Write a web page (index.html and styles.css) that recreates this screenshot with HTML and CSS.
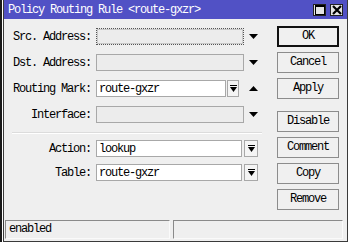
FILE: index.html
```html
<!DOCTYPE html>
<html lang="en">
<head>
    <meta charset="UTF-8">
    <title>Policy Routing Rule</title>
    <link rel="stylesheet" href="styles.css">
</head>
<body>
    <div class="window">
        <div class="titlebar">
            <span class="title">Policy Routing Rule &lt;route-gxzr&gt;</span>
            <div class="winbtns">
                <span class="wbtn">
                    <svg width="10" height="10" viewBox="0 0 10 10"><rect x="0.5" y="0.5" width="9" height="9" fill="none" stroke="#000"/><rect x="0" y="0" width="10" height="2" fill="#000"/></svg>
                </span>
                <span class="wbtn">
                    <svg width="10" height="10" viewBox="0 0 10 10"><path d="M1 1 L9 9 M9 1 L1 9" stroke="#000" stroke-width="2.2"/></svg>
                </span>
            </div>
        </div>
        <div class="content">
            <div class="form">
                <div class="group">
                    <div class="row">
                        <label>Src. Address:</label>
                        <div class="field empty focus"></div>
                        <span class="tail"><svg width="9" height="5" viewBox="0 0 9 5"><path d="M0 0 H9 L4.5 5 Z"/></svg></span>
                    </div>
                    <div class="row">
                        <label>Dst. Address:</label>
                        <div class="field empty"></div>
                        <span class="tail"><svg width="9" height="5" viewBox="0 0 9 5"><path d="M0 0 H9 L4.5 5 Z"/></svg></span>
                    </div>
                    <div class="row">
                        <label>Routing Mark:</label>
                        <div class="field short">route-gxzr</div>
                        <span class="pick"><svg width="7" height="7" viewBox="0 0 7 7"><path d="M0 0.5 H7" stroke="#000"/><path d="M0 2 H7 L3.5 7 Z"/></svg></span>
                        <span class="tail up"><svg width="9" height="5" viewBox="0 0 9 5"><path d="M0 5 H9 L4.5 0 Z"/></svg></span>
                    </div>
                    <div class="row">
                        <label>Interface:</label>
                        <div class="field empty"></div>
                        <span class="tail"><svg width="9" height="5" viewBox="0 0 9 5"><path d="M0 0 H9 L4.5 5 Z"/></svg></span>
                    </div>
                </div>
                <div class="sep"></div>
                <div class="group tight">
                    <div class="row">
                        <label>Action:</label>
                        <div class="field wide">lookup</div>
                        <span class="pick end"><svg width="7" height="7" viewBox="0 0 7 7"><path d="M0 0.5 H7" stroke="#000"/><path d="M0 2 H7 L3.5 7 Z"/></svg></span>
                    </div>
                    <div class="row">
                        <label>Table:</label>
                        <div class="field wide">route-gxzr</div>
                        <span class="pick end"><svg width="7" height="7" viewBox="0 0 7 7"><path d="M0 0.5 H7" stroke="#000"/><path d="M0 2 H7 L3.5 7 Z"/></svg></span>
                    </div>
                </div>
            </div>
            <div class="buttons">
                <div class="btn default">OK</div>
                <div class="btn">Cancel</div>
                <div class="btn">Apply</div>
                <div class="btn spaced">Disable</div>
                <div class="btn">Comment</div>
                <div class="btn">Copy</div>
                <div class="btn">Remove</div>
            </div>
        </div>
        <div class="status">
            <div class="panel first">enabled</div>
            <div class="panel"></div>
        </div>
    </div>
</body>
</html>
```

FILE: styles.css
```css
*{
    margin:0;
    padding:0;
    box-sizing:border-box;
}
body{
    background:#fff;
    border-left:2px solid #1a1a1a;
    font-family:"Liberation Mono", "DejaVu Sans Mono", monospace;
    font-size:12px;
    letter-spacing:-1.2px;
    color:#000;
}
.window{
    display:flex;
    flex-direction:column;
    width:345px;
    height:242px;
    margin-left:1px;
    background:#efefef;
    border:1px solid #3a3a3a;
    border-top:0;
}
.titlebar{
    display:flex;
    align-items:center;
    justify-content:space-between;
    height:19px;
    padding:0 4px 0 4px;
    background:#5151c5;
}
.title{
    color:#fff;
}
.winbtns{
    display:flex;
    gap:4px;
}
.wbtn{
    display:flex;
    align-items:center;
    justify-content:center;
    width:13px;
    height:12px;
    background:#e4e4e4;
    border:1px solid #222;
}
.content{
    flex:1;
    display:flex;
    justify-content:space-between;
}
.form{
    padding-top:9px;
}
.group{
    display:flex;
    flex-direction:column;
    gap:9px;
}
.group.tight{
    gap:7px;
}
.row{
    display:flex;
    align-items:center;
    height:17px;
}
.row label{
    width:87px;
    margin-right:5px;
    text-align:right;
}
.field{
    width:148px;
    height:17px;
    padding:1px 2px;
    line-height:14px;
    background:#fff;
    border:1px solid #a8a8a8;
}
.field.empty{
    background:#ececec;
}
.field.focus{
    border:1px dotted #555;
    outline:1px solid #c8c8c8;
    outline-offset:-2px;
}
.field.short{
    width:130px;
}
.field.wide{
    width:146px;
}
.pick{
    display:flex;
    align-items:center;
    justify-content:center;
    width:12px;
    height:17px;
    margin-left:1px;
    background:#f4f4f4;
    border:1px solid #a8a8a8;
}
.pick.end{
    width:14px;
    margin-left:2px;
}
.tail{
    display:flex;
    justify-content:center;
    width:10px;
    margin-left:4px;
}
.row .up{
    margin-left:9px;
}
.sep{
    width:250px;
    margin:9px 0 6px 8px;
    border-top:1px solid #dcdcdc;
    border-bottom:1px solid #fff;
}
.buttons{
    display:flex;
    flex-direction:column;
    gap:5px;
    width:62px;
    margin:7px 8px 0 0;
}
.btn{
    height:21px;
    line-height:19px;
    text-align:center;
    background:#f0f0f0;
    border:1px solid #8c8c8c;
}
.btn.default{
    border:2px solid #111;
    line-height:17px;
}
.btn.spaced{
    margin-top:7px;
}
.status{
    display:flex;
    gap:3px;
    padding:0 4px 2px 1px;
}
.panel{
    flex:1;
    height:19px;
    padding-left:3px;
    line-height:17px;
    border-top:1px solid #8a8a8a;
    border-left:1px solid #8a8a8a;
    border-right:1px solid #fafafa;
    border-bottom:1px solid #fafafa;
}
.panel.first{
    flex:none;
    width:165px;
}
```
